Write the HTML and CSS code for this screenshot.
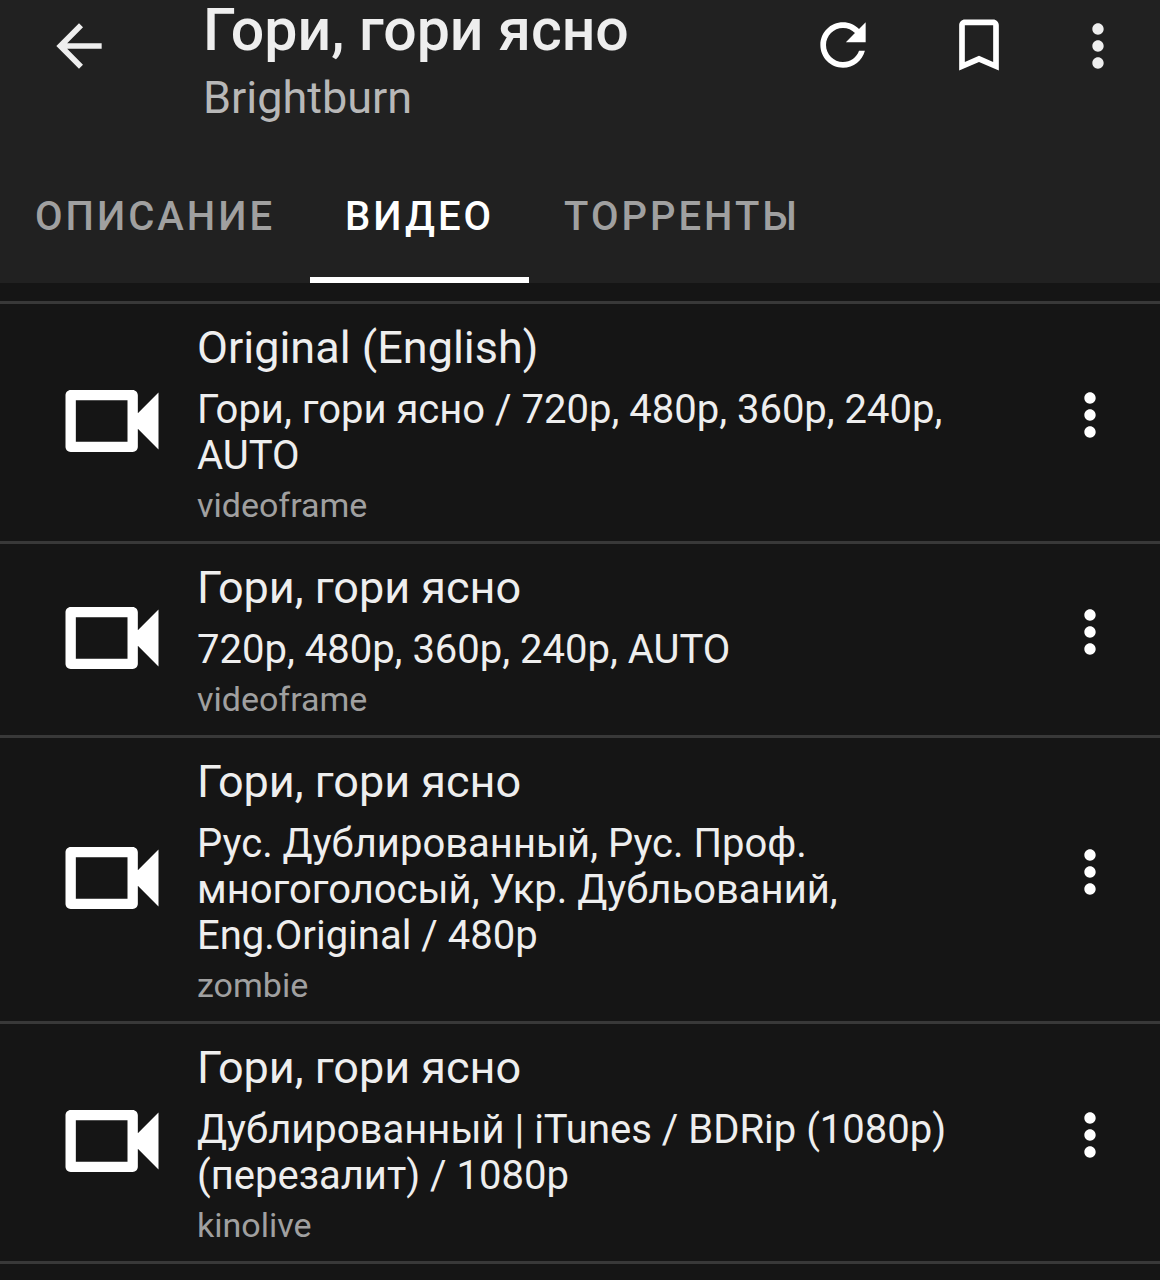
FILE: index.html
```html
<!DOCTYPE html>
<html lang="ru">
<head>
    <meta charset="UTF-8">
    <meta name="viewport" content="width=device-width, initial-scale=1.0">
    <title>Гори, гори ясно</title>
    <link rel="stylesheet" href="styles.css">
</head>
<body>

<!-- Shared icons -->
<svg class="sprite" aria-hidden="true">
    <symbol id="icon-more" viewBox="0 0 24 24">
        <path d="M12 8c1.1 0 2-.9 2-2s-.9-2-2-2-2 .9-2 2 .9 2 2 2zm0 2c-1.1 0-2 .9-2 2s.9 2 2 2 2-.9 2-2-.9-2-2-2zm0 6c-1.1 0-2 .9-2 2s.9 2 2 2 2-.9 2-2-.9-2-2-2z"/>
    </symbol>
    <symbol id="icon-video" viewBox="0 0 24 24">
        <path fill-rule="evenodd" d="M4 6h12c.55 0 1 .45 1 1v3.5l4-4v11l-4-4V17c0 .55-.45 1-1 1H4c-.55 0-1-.45-1-1V7c0-.55.45-1 1-1zm1 2v8h10V8H5z"/>
    </symbol>
</svg>

<header>
    <div class="toolbar">
        <button class="icon-btn" aria-label="Назад">
            <svg class="icon" viewBox="0 0 24 24"><path d="M20 11H7.83l5.59-5.59L12 4l-8 8 8 8 1.41-1.41L7.83 13H20v-2z"/></svg>
        </button>
        <div class="heading">
            <h1>Гори, гори ясно</h1>
            <p>Brightburn</p>
        </div>
        <div class="actions">
            <button class="action-btn" aria-label="Обновить">
                <svg class="icon" viewBox="0 0 24 24"><path d="M17.65 6.35C16.2 4.9 14.21 4 12 4c-4.42 0-7.99 3.58-7.99 8s3.57 8 7.99 8c3.73 0 6.84-2.55 7.73-6h-2.08c-.82 2.33-3.04 4-5.65 4-3.31 0-6-2.69-6-6s2.69-6 6-6c1.66 0 3.14.69 4.22 1.78L13 11h7V4l-2.35 2.35z"/></svg>
            </button>
            <button class="action-btn" aria-label="В закладки">
                <svg class="icon" viewBox="0 0 24 24"><path d="M17 3H7c-1.1 0-2 .9-2 2v16l7-3 7 3V5c0-1.1-.9-2-2-2zm0 15l-5-2.18L7 18V5h10v13z"/></svg>
            </button>
            <button class="icon-btn" aria-label="Ещё">
                <svg class="icon"><use href="#icon-more"/></svg>
            </button>
        </div>
    </div>
    <nav class="tabs">
        <a href="#description">ОПИСАНИЕ</a>
        <a href="#video" class="active">ВИДЕО</a>
        <a href="#torrents">ТОРРЕНТЫ</a>
    </nav>
</header>

<main>
    <ul class="video-list">
        <li>
            <svg class="video-icon"><use href="#icon-video"/></svg>
            <div class="info">
                <h2>Original (English)</h2>
                <p class="description">Гори, гори ясно / 720p, 480p, 360p, 240p, AUTO</p>
                <p class="source">videoframe</p>
            </div>
            <button class="more-btn" aria-label="Меню">
                <svg class="icon"><use href="#icon-more"/></svg>
            </button>
        </li>
        <li>
            <svg class="video-icon"><use href="#icon-video"/></svg>
            <div class="info">
                <h2>Гори, гори ясно</h2>
                <p class="description">720p, 480p, 360p, 240p, AUTO</p>
                <p class="source">videoframe</p>
            </div>
            <button class="more-btn" aria-label="Меню">
                <svg class="icon"><use href="#icon-more"/></svg>
            </button>
        </li>
        <li>
            <svg class="video-icon"><use href="#icon-video"/></svg>
            <div class="info">
                <h2>Гори, гори ясно</h2>
                <p class="description">Рус. Дублированный, Рус. Проф. многоголосый, Укр. Дубльований, Eng.Original / 480p</p>
                <p class="source">zombie</p>
            </div>
            <button class="more-btn" aria-label="Меню">
                <svg class="icon"><use href="#icon-more"/></svg>
            </button>
        </li>
        <li>
            <svg class="video-icon"><use href="#icon-video"/></svg>
            <div class="info">
                <h2>Гори, гори ясно</h2>
                <p class="description">Дублированный | iTunes / BDRip (1080p) (перезалит) / 1080p</p>
                <p class="source">kinolive</p>
            </div>
            <button class="more-btn" aria-label="Меню">
                <svg class="icon"><use href="#icon-more"/></svg>
            </button>
        </li>
    </ul>
</main>

</body>
</html>
```
FILE: styles.css
```css
* {
    box-sizing: border-box;
}
body {
    font-family: Roboto, "Noto Sans", sans-serif;
    margin: 0;
    background-color: #151515;
    color: #eeeeee;
}
h1, h2, p, ul {
    margin: 0;
    padding: 0;
    font-weight: 400;
}
button {
    padding: 0;
    border: none;
    background: none;
    color: inherit;
    cursor: pointer;
}
.sprite {
    display: none;
}
.icon {
    display: block;
    width: 68px;
    height: 68px;
    fill: currentColor;
}

/* Header */
header {
    background-color: #212121;
}
.toolbar {
    display: flex;
    align-items: flex-start;
    padding: 0 11px 0 28px;
}
.icon-btn {
    padding: 12px 17px 0;
}
.action-btn {
    padding: 11px 34px 0;
    color: #ffffff;
}
.heading {
    flex: 1;
    padding-left: 73px;
}
.heading h1 {
    font-size: 59px;
    font-weight: 500;
    line-height: 60px;
    white-space: nowrap;
}
.heading p {
    margin-top: 11px;
    font-size: 45px;
    line-height: 54px;
    color: #b8b8b8;
}
.actions {
    display: flex;
    align-items: flex-start;
}
.tabs {
    display: flex;
    margin-top: 21px;
}
.tabs a {
    padding: 48px 35px 37px;
    border-bottom: 6px solid transparent;
    font-size: 40px;
    font-weight: 500;
    line-height: 46px;
    letter-spacing: 3px;
    color: #a0a0a0;
    text-decoration: none;
}
.tabs a.active {
    color: #ffffff;
    border-color: #ffffff;
}

/* Video list */
.video-list {
    margin-top: 18px;
    list-style: none;
    border-bottom: 3px solid #383838;
}
.video-list li {
    display: flex;
    align-items: center;
    padding: 17px 36px 16px 50px;
    border-top: 3px solid #383838;
}
.video-icon {
    flex: none;
    width: 124px;
    height: 124px;
    margin: -20px 0 -16px;
    fill: #ffffff;
}
.info {
    flex: 1;
    padding: 0 80px 0 23px;
}
.info h2 {
    font-size: 45px;
    line-height: 54px;
}
.description {
    margin-top: 12px;
    font-size: 40px;
    line-height: 46px;
}
.source {
    margin-top: 6px;
    font-size: 34px;
    line-height: 40px;
    color: #a0a0a0;
}
.more-btn {
    padding-bottom: 16px;
    color: #ffffff;
}
```
